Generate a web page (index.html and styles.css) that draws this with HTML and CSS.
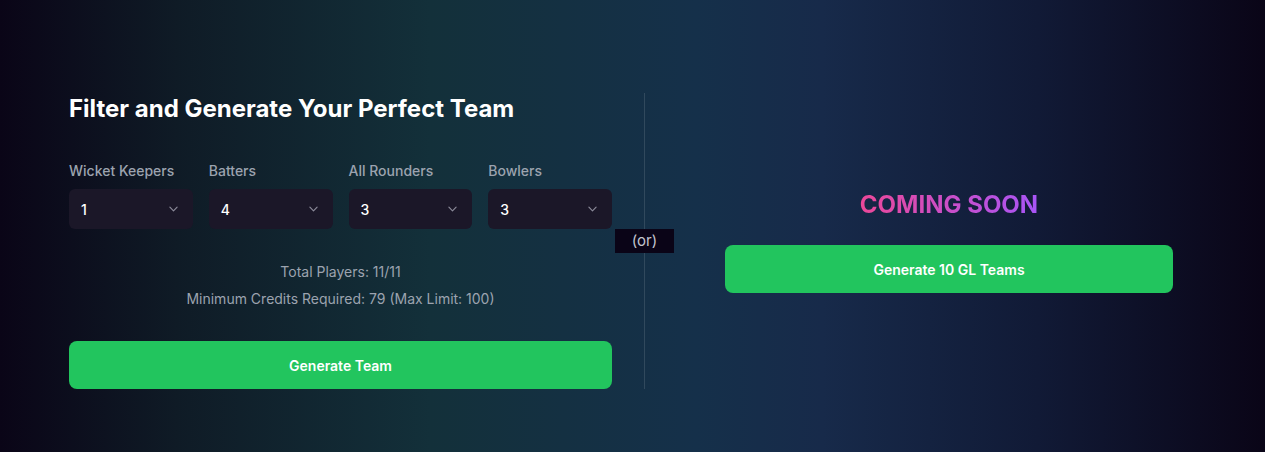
FILE: index.html
```html
<!DOCTYPE html>
<html lang="en">
<head>
<meta charset="utf-8">
<title>Team Generator</title>
<link rel="stylesheet" href="styles.css">
</head>
<body>
<main class="page">
  <section class="left">
    <h1 class="title">Filter and Generate Your Perfect Team</h1>
    <div class="filters">
      <div class="field">
        <label class="label">Wicket Keepers</label>
        <div class="select"><span>1</span><svg class="chev" viewBox="0 0 10 6" width="9" height="6"><path d="M1 1l4 4 4-4" fill="none" stroke="#8b8a99" stroke-width="1.3" stroke-linecap="round" stroke-linejoin="round"/></svg></div>
      </div>
      <div class="field">
        <label class="label">Batters</label>
        <div class="select"><span>4</span><svg class="chev" viewBox="0 0 10 6" width="9" height="6"><path d="M1 1l4 4 4-4" fill="none" stroke="#8b8a99" stroke-width="1.3" stroke-linecap="round" stroke-linejoin="round"/></svg></div>
      </div>
      <div class="field">
        <label class="label">All Rounders</label>
        <div class="select"><span>3</span><svg class="chev" viewBox="0 0 10 6" width="9" height="6"><path d="M1 1l4 4 4-4" fill="none" stroke="#8b8a99" stroke-width="1.3" stroke-linecap="round" stroke-linejoin="round"/></svg></div>
      </div>
      <div class="field">
        <label class="label">Bowlers</label>
        <div class="select"><span>3</span><svg class="chev" viewBox="0 0 10 6" width="9" height="6"><path d="M1 1l4 4 4-4" fill="none" stroke="#8b8a99" stroke-width="1.3" stroke-linecap="round" stroke-linejoin="round"/></svg></div>
      </div>
    </div>
    <div class="stats">
      <p>Total Players: 11/11</p>
      <p>Minimum Credits Required: 79 (Max Limit: 100)</p>
    </div>
    <button class="btn">Generate Team</button>
  </section>
  <div class="divider"><span class="or">(or)</span></div>
  <section class="right">
    <div class="right-inner">
      <h2 class="soon">COMING SOON</h2>
      <button class="btn">Generate 10 GL Teams</button>
    </div>
  </section>
</main>
</body>
</html>
```
FILE: styles.css
```css
* { box-sizing: border-box; }
html, body { margin: 0; padding: 0; }
body {
  width: 1265px;
  height: 452px;
  overflow: hidden;
  font-family: Inter, "Noto Sans", sans-serif;
  color: #fff;
  background: linear-gradient(to right, #0a0517 0%, #0f1b26 14%, #13303a 34%, #15304a 55%, #172a4a 65%, #111a36 82%, #0a0517 100%);
}
.page {
  display: flex;
  align-items: stretch;
  padding: 93px 12px 0 69px;
  height: 452px;
}
.left {
  width: 543px;
  display: flex;
  flex-direction: column;
  height: 296px;
}
.title {
  margin: 0;
  font-size: 24px;
  line-height: 32px;
  font-weight: 700;
}
.filters {
  display: grid;
  grid-template-columns: repeat(4, 1fr);
  gap: 16px;
  margin-top: 36px;
}
.field { display: flex; flex-direction: column; }
.label {
  font-size: 14px;
  line-height: 20px;
  color: #9ca3af;
  font-weight: 500;
}
.select {
  margin-top: 8px;
  height: 40px;
  border-radius: 6px;
  background: #1b1728;
  display: flex;
  align-items: center;
  justify-content: space-between;
  padding: 0 15px 0 12px;
  font-size: 14px;
  font-weight: 500;
}
.chev { display: block; }
.stats {
  margin-top: 33px;
  text-align: center;
  font-size: 14px;
  color: #9ca3af;
}
.stats p { margin: 0; line-height: 20px; }
.stats p + p { margin-top: 7px; }
.btn {
  margin-top: auto;
  height: 48px;
  width: 100%;
  border: 0;
  border-radius: 8px;
  background: #22c55e;
  color: #fff;
  font-family: Inter, "Noto Sans", sans-serif;
  font-size: 14px;
  font-weight: 600;
}
.divider {
  position: relative;
  width: 1px;
  height: 296px;
  margin-left: 32px;
  background: rgba(255, 255, 255, 0.12);
}
.or {
  position: absolute;
  left: -29px;
  top: 136px;
  width: 59px;
  height: 24px;
  background: #0a0417;
  color: #c3c5cf;
  font-size: 15px;
  line-height: 24px;
  text-align: center;
}
.right {
  flex: 1;
  height: 296px;
  display: flex;
  align-items: center;
  justify-content: center;
}
.right-inner {
  width: 448px;
  display: flex;
  flex-direction: column;
  align-items: center;
}
.soon {
  margin: 0;
  font-size: 24px;
  line-height: 32px;
  font-weight: 700;
  background: linear-gradient(to right, #ec4899, #a855f7);
  -webkit-background-clip: text;
  background-clip: text;
  color: transparent;
}
.right-inner .btn { margin-top: 24px; }
```
